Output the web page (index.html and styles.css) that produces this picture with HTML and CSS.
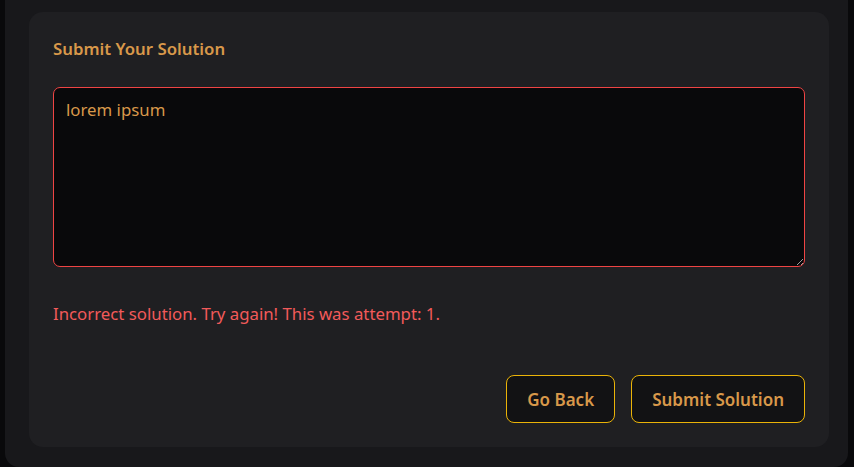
FILE: index.html
```html
<!DOCTYPE html>
<html lang="en">
<head>
    <meta charset="UTF-8">
    <meta name="viewport" content="width=device-width, initial-scale=1.0">
    <title>Submit Your Solution</title>
    <link rel="stylesheet" href="styles.css">
</head>
<body>

<div class="panel">
    <div class="card">
        <h2 class="card-title">Submit Your Solution</h2>
        <textarea class="solution" id="solution">lorem ipsum</textarea>
        <p class="error">Incorrect solution. Try again! This was attempt: 1.</p>
        <div class="actions">
            <button class="btn">Go Back</button>
            <button class="btn">Submit Solution</button>
        </div>
    </div>
</div>

</body>
</html>
```

FILE: styles.css
```css
body {
    margin: 0;
    padding: 0 6px 0 5px;
    background-color: #09090b;
    font-family: "Noto Sans", "Open Sans", sans-serif;
    height: 467px;
    overflow: hidden;
}

.panel {
    background-color: #18181b;
    border-radius: 0 0 14px 14px;
    padding: 12px 19px 20px 24px;
    height: 467px;
    box-sizing: border-box;
}

.card {
    background-color: #1f1f22;
    border-radius: 14px;
    padding: 25px 24px 24px 24px;
}

.card-title {
    margin: 0 0 26px 0;
    font-size: 16.8px;
    line-height: 24px;
    font-weight: 600;
    color: #d8984a;
}

.solution {
    display: block;
    width: 100%;
    height: 180px;
    box-sizing: border-box;
    padding: 10px 12px;
    background-color: #09090b;
    border: 1px solid #ef4444;
    border-radius: 7px;
    color: #d8984a;
    font-family: inherit;
    font-size: 16.8px;
    line-height: 24px;
    resize: vertical;
    outline: none;
}

.error {
    margin: 35px 0 49px 0;
    font-size: 16.8px;
    line-height: 24px;
    color: #f25a5a;
}

.actions {
    display: flex;
    justify-content: flex-end;
    gap: 16px;
}

.btn {
    height: 48px;
    padding: 0 20px;
    background-color: #121214;
    border: 1px solid #eab308;
    border-radius: 8px;
    color: #d8984a;
    font-family: inherit;
    font-size: 17px;
    font-weight: 600;
    cursor: pointer;
}
```
